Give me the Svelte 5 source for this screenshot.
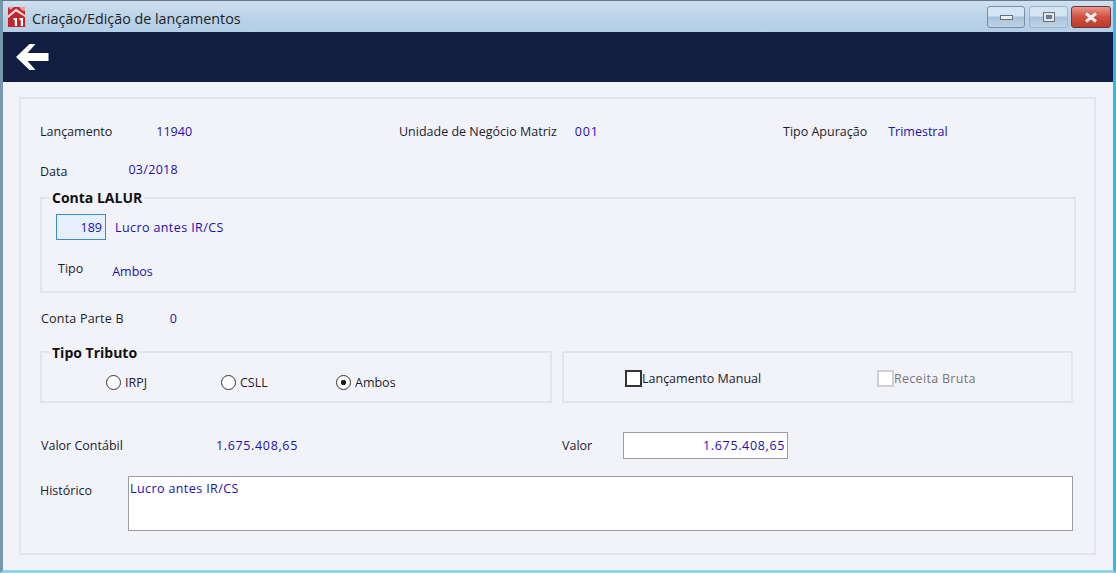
<script lang="ts">
    let manual = $state(false);
    let tributo = $state('Ambos');
    let valor = $state('1.675.408,65');
    let historico = $state('Lucro antes IR/CS');
    const tributos = ['IRPJ', 'CSLL', 'Ambos'];
</script>

<div class="window">
    <header class="titlebar">
        <svg class="app-icon" viewBox="0 0 17 20" width="17" height="20" aria-hidden="true">
            <rect width="17" height="20" fill="#c0272d" />
            <path d="M0 8.5 L8 1.5 L17 8 V10 L8 4.5 L0 11 Z" fill="#f6dcdc" />
            <path d="M2.5 3 L6 0 H0 Z M14 3.5 L11 0 H17 V4 Z" fill="#e8a0a0" />
            <path d="M5.5 11 H9 V19 H6.8 V13 H5.5 Z M11.5 11 H15 V19 H12.8 V13 H11.5 Z" fill="#fff" />
        </svg>
        <span class="title">Criação/Edição de lançamentos</span>
        <div class="controls">
            <button class="ctl" aria-label="Minimizar"><span class="min"></span></button>
            <button class="ctl mid" aria-label="Maximizar"><span class="max"></span></button>
            <button class="ctl close" aria-label="Fechar">
                <svg viewBox="0 0 14 11" width="14" height="11">
                    <path d="M2 1.5 L12 9.5 M12 1.5 L2 9.5" stroke="#eee" stroke-width="3" />
                </svg>
            </button>
        </div>
    </header>

    <nav class="toolbar">
        <button class="back" aria-label="Voltar">
            <svg viewBox="0 0 33 26" width="33" height="26">
                <path d="M0 13 L13.5 0 H19.5 L11.5 9 H32.5 V17 H11.5 L19.5 26 H13.5 Z" fill="#fff" />
            </svg>
        </button>
    </nav>

    <main class="content">
        <section class="panel">
            <div class="row first">
                <div class="field f1"><span class="lbl">Lançamento</span><span class="val">11940</span></div>
                <div class="field f2"><span class="lbl">Unidade de Negócio Matriz</span><span class="val">001</span></div>
                <div class="field f3"><span class="lbl">Tipo Apuração</span><span class="val">Trimestral</span></div>
            </div>

            <div class="row data">
                <span class="lbl">Data</span><span class="val">03/2018</span>
            </div>

            <fieldset class="box conta">
                <legend>Conta LALUR</legend>
                <div class="conta-line">
                    <input class="code" value="189" aria-label="Conta" />
                    <span class="val wide">Lucro antes IR/CS</span>
                </div>
                <div class="tipo-line">
                    <span class="lbl">Tipo</span><span class="val">Ambos</span>
                </div>
            </fieldset>

            <div class="row parte">
                <span class="lbl">Conta Parte B</span><span class="val">0</span>
            </div>

            <div class="options">
                <fieldset class="box tributo">
                    <legend>Tipo Tributo</legend>
                    {#each tributos as t}
                        <label class="radio">
                            <input type="radio" name="tributo" value={t} bind:group={tributo} />
                            <i></i>{t}
                        </label>
                    {/each}
                </fieldset>
                <div class="box checks">
                    <label class="check">
                        <input type="checkbox" bind:checked={manual} />
                        <i></i>Lançamento Manual
                    </label>
                    <label class="check off">
                        <input type="checkbox" disabled />
                        <i></i>Receita Bruta
                    </label>
                </div>
            </div>

            <div class="row valores">
                <span class="lbl contabil">Valor Contábil</span>
                <span class="val soma">1.675.408,65</span>
                <span class="lbl valor">Valor</span>
                <input class="amount" bind:value={valor} aria-label="Valor" />
            </div>

            <div class="row hist">
                <span class="lbl">Histórico</span>
                <textarea bind:value={historico} aria-label="Histórico"></textarea>
            </div>
        </section>
    </main>
</div>

<style>
    :global(body) {
        margin: 0;
        background: #f2f3f9;
    }
    .window {
        width: 1116px;
        height: 573px;
        box-sizing: border-box;
        display: flex;
        flex-direction: column;
        overflow: hidden;
        font-family: "Open Sans", "Noto Sans", sans-serif;
        font-size: 12.5px;
        color: #1c1c2c;
        background: #f2f3f9;
        border-top: 1px solid #66788a;
        border-left: 3px solid #7596ad;
        border-right: 3px solid #3fb4dc;
        border-bottom: 3px solid #8fd4ee;
    }
    .titlebar {
        height: 31px;
        flex: none;
        display: flex;
        align-items: center;
        padding: 0 2px 0 5px;
        background: linear-gradient(#cfe0ef, #b9d2e8 60%, #b4cfe6);
    }
    .app-icon {
        margin: 1px 7px 0 0;
    }
    .title {
        margin-top: 3px;
        font-size: 14.3px;
        color: #222;
    }
    .controls {
        margin-left: auto;
        display: flex;
        gap: 4px;
        margin-top: 1px;
    }
    .ctl {
        width: 38px;
        height: 22px;
        padding: 0;
        display: flex;
        align-items: center;
        justify-content: center;
        border: 1px solid #7b8ea5;
        border-radius: 3px;
        background: linear-gradient(#d5e4f2 45%, #a9c2da 50%, #bed3e6);
    }
    .ctl.mid {
        width: 39px;
        margin-right: -1px;
        border-color: #9db3c8;
    }
    .ctl.close {
        width: 40px;
        border-color: #6e3340;
        background: linear-gradient(#e8988a, #d0503e 50%, #bd3a28);
    }
    .min {
        width: 11px;
        height: 3px;
        background: #eee;
        border: 1px solid #66707c;
    }
    .max {
        width: 6px;
        height: 4px;
        border: 2px solid #e6e6e6;
        outline: 1px solid #66707c;
        background: #667a96;
    }
    .toolbar {
        height: 50px;
        flex: none;
        display: flex;
        align-items: center;
        padding-left: 13px;
        background: #111d41;
    }
    .back {
        padding: 0;
        border: 0;
        background: none;
        display: flex;
    }
    .content {
        flex: 1;
        padding: 15px 17px 15px 16px;
        display: flex;
    }
    .panel {
        flex: 1;
        border: 2px solid #e4e5e9;
        padding: 0 0 0 19px;
    }
    .lbl {
        color: #1c1c2c;
    }
    .val {
        color: #1c10b0;
    }
    .wide {
        letter-spacing: 0.4px;
    }
    .row {
        display: flex;
        align-items: center;
    }
    .first {
        height: 18px;
        margin-top: 23px;
    }
    .field {
        display: flex;
    }
    .f1 {
        width: 359px;
    }
    .f1 .val {
        margin-left: 44px;
    }
    .f2 {
        width: 384px;
    }
    .f2 .val {
        margin-left: 18px;
        letter-spacing: 0.8px;
    }
    .f3 .val {
        margin-left: 21px;
    }
    .data {
        margin-top: 21px;
        height: 18px;
    }
    .data .lbl {
        margin-top: 3px;
    }
    .data .val {
        margin-left: 61px;
        margin-top: -1px;
        letter-spacing: 0.3px;
    }
    .box {
        margin: 0;
        box-sizing: border-box;
        border: 2px solid #e4e5e9;
        background: transparent;
    }
    legend {
        padding: 0 2px;
        font-weight: 700;
        font-size: 14px;
        color: #111;
        line-height: 14px;
    }
    .conta {
        width: 1036px;
        height: 102px;
        margin-top: 12px;
        padding: 0 0 0 14px;
    }
    .conta legend {
        margin-left: -6px;
    }
    .conta-line {
        display: flex;
        align-items: center;
        margin-top: 9px;
    }
    .code {
        width: 50px;
        height: 26px;
        box-sizing: border-box;
        padding: 0 3px 0 0;
        text-align: right;
        font: inherit;
        color: #1c10b0;
        background: #e6f0fc;
        border: 1px solid #3f8ccc;
        outline: none;
    }
    .conta-line .val {
        margin-left: 9px;
    }
    .tipo-line {
        display: flex;
        margin: 20px 0 0 2px;
    }
    .tipo-line .val {
        margin: 3px 0 0 29px;
    }
    .parte {
        margin-top: 16px;
        height: 18px;
    }
    .parte .lbl {
        margin-left: 1px;
        letter-spacing: 0.2px;
    }
    .parte .val {
        margin-left: 46px;
    }
    .options {
        display: flex;
        gap: 10px;
        margin-top: 18px;
    }
    .tributo {
        width: 512px;
        height: 58px;
        padding: 0 0 0 64px;
        display: flex;
    }
    .tributo legend {
        margin-left: -56px;
        position: relative;
        top: 1px;
    }
    .radio,
    .check {
        display: inline-flex;
        align-items: center;
        height: 18px;
        flex: none;
    }
    .radio {
        width: 115px;
        margin-top: 14px;
    }
    .radio input,
    .check input {
        position: absolute;
        opacity: 0;
        width: 0;
        height: 0;
    }
    .radio i {
        width: 13px;
        height: 13px;
        margin-right: 4px;
        border: 1.5px solid #333;
        border-radius: 50%;
        background: #fff;
        box-sizing: content-box;
    }
    .radio input:checked + i {
        background: radial-gradient(circle, #222 0 2.5px, #fff 3px);
    }
    .checks {
        width: 511px;
        height: 52px;
        margin-top: 6px;
        padding: 16px 0 0 61px;
        display: flex;
    }
    .check {
        width: 252px;
    }
    .check i {
        width: 13px;
        height: 13px;
        margin-right: 0;
        border: 2px solid #333;
        background: #fff;
    }
    .check.off {
        color: #777;
        letter-spacing: 0.3px;
    }
    .check.off i {
        border-color: #d0d0d4;
    }
    .valores {
        margin-top: 29px;
        height: 27px;
    }
    .contabil {
        margin-left: 1px;
        width: 175px;
    }
    .soma {
        width: 346px;
        letter-spacing: 0.65px;
    }
    .valor {
        width: 61px;
    }
    .amount {
        width: 165px;
        height: 27px;
        box-sizing: border-box;
        padding: 0 2px 0 0;
        text-align: right;
        font: inherit;
        letter-spacing: 0.65px;
        color: #1c10b0;
        background: #fff;
        border: 1px solid #9c9da4;
        outline: none;
    }
    .hist {
        margin-top: 17px;
        align-items: flex-start;
    }
    .hist .lbl {
        width: 88px;
        margin-top: 6px;
    }
    textarea {
        width: 945px;
        height: 55px;
        box-sizing: border-box;
        padding: 3px 0 0 1px;
        resize: none;
        font: inherit;
        letter-spacing: 0.4px;
        color: #1c10b0;
        background: #fff;
        border: 1px solid #9c9da4;
        outline: none;
    }
</style>
